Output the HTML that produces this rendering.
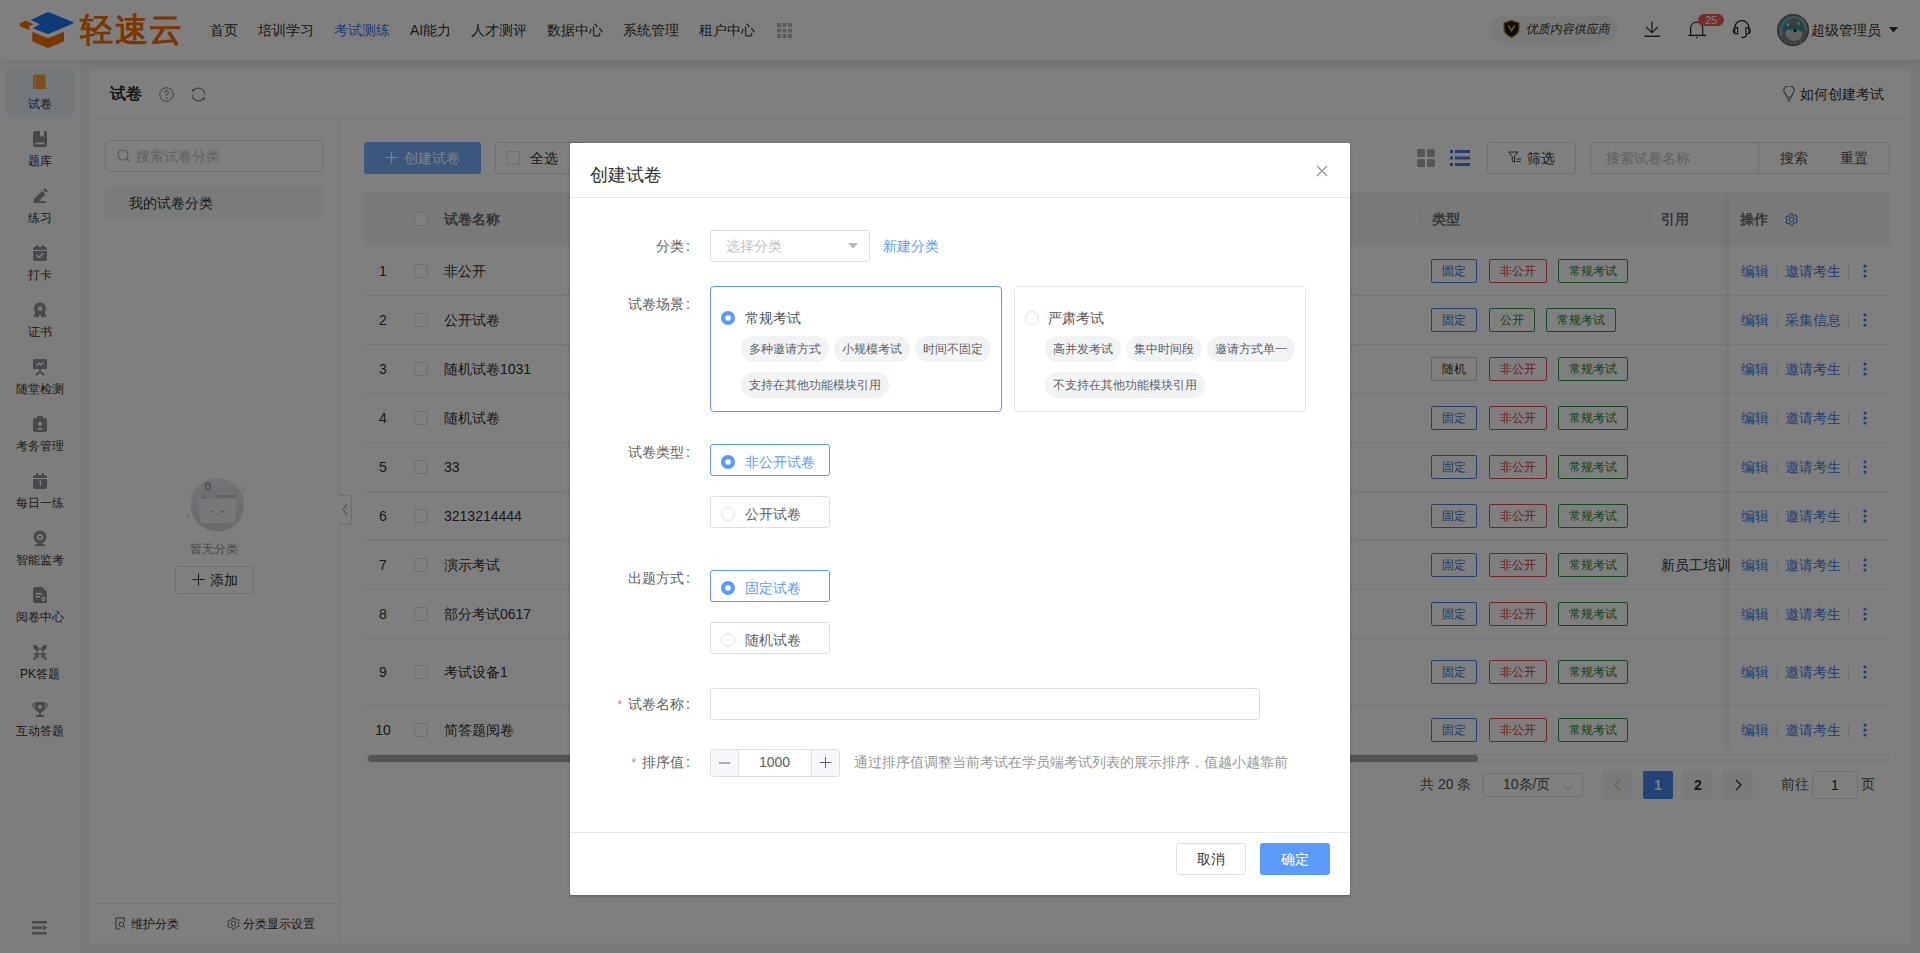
<!DOCTYPE html>
<html><head><meta charset="utf-8">
<style>
*{box-sizing:border-box;margin:0;padding:0}
html,body{width:1920px;height:953px;overflow:hidden;font-family:"Liberation Sans",sans-serif;color:#333;background:#f0f2f5;position:relative;font-size:14px}
.a{position:absolute;white-space:nowrap}
#top{position:absolute;left:0;top:0;width:1920px;height:60px;background:#fff;box-shadow:0 2px 8px rgba(0,0,0,.08);z-index:2}
#nav{position:absolute;left:0;top:60px;width:80px;height:893px;background:#fbfbfb}
.ni{position:absolute;left:5px;width:70px;height:49px;border-radius:8px;text-align:center}
.ni .lb{position:absolute;left:0;width:70px;top:28px;font-size:13px;line-height:16px;color:#333}
.ni svg{position:absolute;left:27px;top:8px}
#panel{position:absolute;left:90px;top:70px;width:1820px;height:873px;background:#fff}
#overlay{position:absolute;left:0;top:0;width:1920px;height:953px;background:rgba(0,0,0,.5);z-index:10}
.tag{height:24px;border:1px solid;border-radius:2px;text-align:center;font-size:12px;line-height:22px;background:#fff}
#modal{position:absolute;left:570px;top:143px;width:780px;height:752px;background:#fff;border-radius:2px;z-index:11;box-shadow:0 1px 3px rgba(0,0,0,.3)}
</style></head><body>
<div id="top">
 <svg class="a" style="left:10px;top:5px" width="66" height="46" viewBox="0 0 66 46">
  <path d="M20.8 14.9 L36.5 7.6 Q38.1 6.9 39.7 7.6 L63 17 Q64.5 17.8 63 18.6 L39.7 28.6 Q38.1 29.3 36.5 28.6 L22.8 23.3 L29.7 19.2 Z" fill="#1f72ee"/>
  <path d="M9.9 18.3 L15.8 15.8 L23.5 19.3 L19.3 21.3 L19.3 25.2 L10.5 21.5 Q9.5 21 9.9 18.3Z" fill="#f47000"/>
  <path d="M22.3 26.7 L38.1 33.2 L54 26.7 L54 36.6 L39 42.8 Q38.1 43.2 37.2 42.8 L22.3 36.6 Z" fill="#f47000"/>
 </svg>
 <div class="a" style="left:80px;top:9px;font-size:33px;line-height:42px;color:#f47000;font-weight:bold;letter-spacing:1.5px">轻速云</div>
 <div class="a" style="left:210px;top:20px;line-height:20px;color:#333">首页</div>
 <div class="a" style="left:258px;top:20px;line-height:20px;color:#333">培训学习</div>
 <div class="a" style="left:334px;top:20px;line-height:20px;color:#3f76e3">考试测练</div>
 <div class="a" style="left:410px;top:20px;line-height:20px;color:#333">AI能力</div>
 <div class="a" style="left:471px;top:20px;line-height:20px;color:#333">人才测评</div>
 <div class="a" style="left:547px;top:20px;line-height:20px;color:#333">数据中心</div>
 <div class="a" style="left:623px;top:20px;line-height:20px;color:#333">系统管理</div>
 <div class="a" style="left:699px;top:20px;line-height:20px;color:#333">租户中心</div>
 <svg class="a" style="left:777px;top:23px" width="15" height="15" viewBox="0 0 15 15" fill="#bbb"><rect x="0" y="0" width="4" height="4"/><rect x="5.5" y="0" width="4" height="4"/><rect x="11" y="0" width="4" height="4"/><rect x="0" y="5.5" width="4" height="4"/><rect x="5.5" y="5.5" width="4" height="4"/><rect x="11" y="5.5" width="4" height="4"/><rect x="0" y="11" width="4" height="4"/><rect x="5.5" y="11" width="4" height="4"/><rect x="11" y="11" width="4" height="4"/></svg>
 <div class="a" style="left:1489px;top:16px;width:129px;height:28px;border-radius:14px;background:#f4f4f4"></div>
 <svg class="a" style="left:1503px;top:20px" width="17" height="18" viewBox="0 0 17 18"><path d="M8.5 0.5 L16 3 L16 9 Q16 14 8.5 17.5 Q1 14 1 9 L1 3 Z" fill="#1a1a1a" stroke="#b8860b" stroke-width="1.2"/><path d="M4.5 5.5 L8.5 12 L12.5 5.5 L10.8 5.5 L8.5 9.3 L6.2 5.5 Z" fill="#f5c000"/></svg>
 <div class="a" style="left:1525px;top:21px;font-size:12px;line-height:16px;color:#333;transform:skewX(-10deg);transform-origin:0 100%;letter-spacing:0">优质内容供应商</div>
 <svg class="a" style="left:1635px;top:8px" width="125" height="42" viewBox="0 0 125 42" fill="none" stroke="#2b2b2b" stroke-width="1.2">
  <path d="M16.9 13.8 V24.4 M11 18.9 L16.9 24.6 L22.8 18.9"/><path d="M9.4 28.3 H24.7" stroke-width="1.4"/>
  <path d="M55.6 27 V19.5 A6.1 6.1 0 0 1 67.7 19.5 V27"/><path d="M53.4 27.4 H71" stroke-width="1.5"/><path d="M61 29.6 H62.6" stroke-width="1.3"/>
  <path d="M99.7 26 V19.8 A7.1 7.1 0 0 1 113.9 19.8 V26"/>
  <path d="M102.6 19.6 Q98.3 19.6 98.3 22.8 Q98.3 26 102.6 26Z M110.9 19.6 Q115.3 19.6 115.3 22.8 Q115.3 26 110.9 26Z"/>
  <path d="M111.6 26 Q111.6 29.6 106.5 29.6"/>
 </svg>
 <div class="a" style="left:1698px;top:14px;width:26px;height:12px;border-radius:6px;background:#f05b5b;color:#fff;font-size:11px;line-height:12px;text-align:center">25</div>
 <svg class="a" style="left:1777px;top:14px" width="32" height="32" viewBox="0 0 32 32"><defs><clipPath id="av"><circle cx="16" cy="16" r="16"/></clipPath></defs><g clip-path="url(#av)"><rect width="32" height="32" fill="#7c7c7c"/><path d="M4 22 Q3 6 16 3 Q28 3 29 16" fill="none" stroke="#70b8c8" stroke-width="2.2"/><path d="M7 11 L10 7 L14 12 L19 10 L23 6 L24 13 Q27 20 22 25 L12 26 Q6 20 7 11Z" fill="#2e8f98"/><path d="M8 20 Q9 14 14 16 Q19 14 25 18 Q26 26 18 27 Q11 27 8 20Z" fill="#bcc6ca"/><circle cx="18" cy="16.5" r="1.6" fill="#111"/><path d="M11 8 L12.5 12 L9 12Z M22 7 L23 11 L20 10Z" fill="#cfe3e6"/><path d="M5 26 Q16 34 28 26 L28 32 L5 32Z" fill="#556a80"/><path d="M8 27 L10 30 M13 28 L14 31 M19 28 L18 31 M24 27 L23 30" stroke="#b9c2d0" stroke-width="1"/></g><circle cx="16" cy="16" r="15.6" fill="none" stroke="#555" stroke-width="0.8"/></svg>
 <div class="a" style="left:1811px;top:20px;line-height:20px;color:#333">超级管理员</div>
 <svg class="a" style="left:1889px;top:27px" width="9" height="6" viewBox="0 0 9 6"><path d="M0 0 H9 L4.5 5.5Z" fill="#333"/></svg>
</div>
<div id="nav">
 <div class="a" style="left:5px;top:8px;width:70px;height:49px;border-radius:8px;background:#e9eff9"></div>
 <svg class="a" style="left:32px;top:14px" width="16" height="17" viewBox="0 0 16 17"><rect x="12" y="10" width="2.5" height="5" fill="#f0d040"/><rect x="1" y="0.5" width="12.5" height="14.5" rx="1.5" fill="#fb9e3e"/><path d="M3.3 2.5 V11 M3.3 12.2 V13.2" stroke="#ddd" stroke-width="0.9"/></svg>
 <div class="a" style="left:0;width:80px;text-align:center;top:36px;font-size:12px;line-height:16px;color:#333">试卷</div>
 <svg class="a" style="left:32px;top:71px" width="16" height="17" viewBox="0 0 16 17"><rect x="1" y="0" width="14" height="16" rx="2" fill="#8c9099"/><path d="M8 0 H12 V6 L10 4.5 L8 6Z" fill="#fff"/><rect x="3.5" y="11.5" width="9" height="1.8" fill="#fff"/></svg>
 <div class="a" style="left:0;width:80px;text-align:center;top:93px;font-size:12px;line-height:16px;color:#333">题库</div>
 <svg class="a" style="left:32px;top:128px" width="16" height="17" viewBox="0 0 16 17"><path d="M1.5 15 V11.5 L10 3 L13.5 6.5 L6.8 13.2 H14 V15 Z M11 2 L12.3 0.7 Q13 0 13.7 0.7 L15.3 2.3 Q16 3 15.3 3.7 L14.5 4.5Z" fill="#8c9099"/></svg>
 <div class="a" style="left:0;width:80px;text-align:center;top:150px;font-size:12px;line-height:16px;color:#333">练习</div>
 <svg class="a" style="left:32px;top:185px" width="16" height="17" viewBox="0 0 16 17"><rect x="1" y="2" width="14" height="14" rx="2" fill="#8c9099"/><rect x="4" y="0" width="2" height="4" fill="#8c9099"/><rect x="10" y="0" width="2" height="4" fill="#8c9099"/><rect x="1" y="5" width="14" height="1" fill="#fff"/><path d="M4.5 10 L7 12.5 L11.5 8" stroke="#fff" stroke-width="1.5" fill="none"/></svg>
 <div class="a" style="left:0;width:80px;text-align:center;top:207px;font-size:12px;line-height:16px;color:#333">打卡</div>
 <svg class="a" style="left:32px;top:242px" width="16" height="17" viewBox="0 0 16 17"><circle cx="8" cy="6.5" r="6" fill="#8c9099"/><path d="M8 3.5 L9 5.6 L11.2 5.8 L9.5 7.2 L10 9.4 L8 8.2 L6 9.4 L6.5 7.2 L4.8 5.8 L7 5.6Z" fill="#fff"/><path d="M3.5 10 L1.5 15 L4.5 14.5 L6 16.5 L7.5 12 M12.5 10 L14.5 15 L11.5 14.5 L10 16.5 L8.5 12" fill="#8c9099"/></svg>
 <div class="a" style="left:0;width:80px;text-align:center;top:264px;font-size:12px;line-height:16px;color:#333">证书</div>
 <svg class="a" style="left:32px;top:299px" width="16" height="17" viewBox="0 0 16 17"><rect x="1" y="0" width="14" height="10" rx="1.5" fill="#8c9099"/><path d="M4.5 7 L7 4 L9 6 L11.5 3" stroke="#fff" stroke-width="1.3" fill="none"/><path d="M8 10 V13 M4 16 L8 12.5 L12 16" stroke="#8c9099" stroke-width="1.8" fill="none"/></svg>
 <div class="a" style="left:0;width:80px;text-align:center;top:321px;font-size:12px;line-height:16px;color:#333">随堂检测</div>
 <svg class="a" style="left:32px;top:356px" width="16" height="17" viewBox="0 0 16 17"><rect x="1" y="2" width="14" height="14" rx="2" fill="#8c9099"/><rect x="5" y="0" width="6" height="3.5" rx="1" fill="#8c9099"/><circle cx="8" cy="8" r="2" fill="#fff"/><path d="M4.5 13.5 Q8 9.5 11.5 13.5Z" fill="#fff"/></svg>
 <div class="a" style="left:0;width:80px;text-align:center;top:378px;font-size:12px;line-height:16px;color:#333">考务管理</div>
 <svg class="a" style="left:32px;top:413px" width="16" height="17" viewBox="0 0 16 17"><rect x="1" y="2" width="14" height="14" rx="2" fill="#8c9099"/><rect x="4" y="0" width="2" height="4" fill="#8c9099"/><rect x="10" y="0" width="2" height="4" fill="#8c9099"/><rect x="1" y="5" width="14" height="1" fill="#fff"/><path d="M7 8.5 L8.5 8 V13" stroke="#fff" stroke-width="1.3" fill="none"/></svg>
 <div class="a" style="left:0;width:80px;text-align:center;top:435px;font-size:12px;line-height:16px;color:#333">每日一练</div>
 <svg class="a" style="left:32px;top:470px" width="16" height="17" viewBox="0 0 16 17"><circle cx="8" cy="7" r="6.5" fill="#8c9099"/><circle cx="8" cy="7" r="3" fill="#fff"/><circle cx="8" cy="7" r="1.5" fill="#8c9099"/><path d="M2 16 Q8 10 14 16Z" fill="#8c9099"/></svg>
 <div class="a" style="left:0;width:80px;text-align:center;top:492px;font-size:12px;line-height:16px;color:#333">智能监考</div>
 <svg class="a" style="left:32px;top:527px" width="16" height="17" viewBox="0 0 16 17"><path d="M1 2 Q1 0 3 0 H10 L15 5 V14 Q15 16 13 16 H3 Q1 16 1 14Z" fill="#8c9099"/><rect x="4" y="6" width="6" height="1.5" fill="#fff"/><rect x="4" y="9" width="4" height="1.5" fill="#fff"/><circle cx="11.5" cy="12" r="2.2" fill="#fff"/><circle cx="11.5" cy="12" r="1" fill="#8c9099"/></svg>
 <div class="a" style="left:0;width:80px;text-align:center;top:549px;font-size:12px;line-height:16px;color:#333">阅卷中心</div>
 <svg class="a" style="left:32px;top:584px" width="16" height="17" viewBox="0 0 16 17"><path d="M1 1 L4.5 1.5 L12.5 9.5 L10 12 L1.5 4.5Z M15 1 L11.5 1.5 L3.5 9.5 L6 12 L14.5 4.5Z" fill="#8c9099"/><path d="M2.5 9.5 L6.5 13.5 M13.5 9.5 L9.5 13.5 M1.5 15.5 L4.5 12.5 M14.5 15.5 L11.5 12.5" stroke="#8c9099" stroke-width="1.8"/></svg>
 <div class="a" style="left:0;width:80px;text-align:center;top:606px;font-size:12px;line-height:16px;color:#333">PK答题</div>
 <svg class="a" style="left:32px;top:641px" width="16" height="17" viewBox="0 0 16 17"><path d="M3 1 H13 V6 Q13 11 8 11 Q3 11 3 6Z" fill="#8c9099"/><path d="M3 3 H0.8 Q0.8 7 3.5 7.5 M13 3 H15.2 Q15.2 7 12.5 7.5" stroke="#8c9099" stroke-width="1.2" fill="none"/><path d="M8 3 L8.9 4.8 L10.8 5 L9.4 6.3 L9.8 8.2 L8 7.2 L6.2 8.2 L6.6 6.3 L5.2 5 L7.1 4.8Z" fill="#fff"/><rect x="7" y="11" width="2" height="3" fill="#8c9099"/><rect x="4" y="14" width="8" height="2" fill="#8c9099"/></svg>
 <div class="a" style="left:0;width:80px;text-align:center;top:663px;font-size:12px;line-height:16px;color:#333">互动答题</div>
 <svg class="a" style="left:32px;top:861px" width="16" height="14" viewBox="0 0 16 14" fill="#8c9099"><rect x="0" y="0" width="15" height="2.5"/><rect x="0" y="5.5" width="10" height="2.5"/><rect x="0" y="11" width="15" height="2.5"/><path d="M11 4 L15.5 6.75 L11 9.5Z"/></svg>
</div>
<div id="panel"></div>
<div id="content">
 <div class="a" style="left:110px;top:83px;font-size:16px;line-height:22px;font-weight:bold;color:#333">试卷</div>
 <svg class="a" style="left:159px;top:87px" width="15" height="15" viewBox="0 0 15 15" fill="none" stroke="#7a8190" stroke-width="1"><circle cx="7.5" cy="7.5" r="6.8"/><path d="M5.5 5.8 Q5.5 3.8 7.5 3.8 Q9.5 3.8 9.5 5.6 Q9.5 6.8 7.5 7.6 V9"/><circle cx="7.5" cy="11" r="0.5" fill="#777"/></svg>
 <svg class="a" style="left:191px;top:87px" width="15" height="15" viewBox="0 0 15 15" fill="none" stroke="#7a8190" stroke-width="1.1"><path d="M2.04 4.35 A6.3 6.3 0 0 1 13.8 7.5 M12.96 10.65 A6.3 6.3 0 0 1 1.2 7.5"/><path d="M1 2 L4.2 2.8 L1.6 5.2Z M14 13 L10.8 12.2 L13.4 9.8Z" fill="#7a8190" stroke="none"/></svg>
 <svg class="a" style="left:1783px;top:86px" width="12" height="16" viewBox="0 0 12 16" fill="none" stroke="#666" stroke-width="1.1"><path d="M3.5 11 Q3.5 9 2 7.5 Q0.8 6 0.8 4.8 A5.2 5.2 0 0 1 11.2 4.8 Q11.2 6 10 7.5 Q8.5 9 8.5 11 Z M4 13 H8 M4.8 15 H7.2"/></svg>
 <div class="a" style="left:1800px;top:84px;line-height:20px;color:#333">如何创建考试</div>
 <div class="a" style="left:90px;top:118px;width:1820px;height:1px;background:#ebeef5"></div>
 <div class="a" style="left:339px;top:119px;width:1px;height:824px;background:#e4e7ed"></div>
 <!-- category panel -->
 <div class="a" style="left:105px;top:140px;width:218px;height:32px;border:1px solid #dcdfe6;border-radius:4px"></div>
 <svg class="a" style="left:117px;top:149px" width="14" height="14" viewBox="0 0 14 14" fill="none" stroke="#b0b3b8" stroke-width="1.2"><circle cx="6" cy="6" r="5"/><path d="M9.7 9.7 L12.5 12.5"/></svg>
 <div class="a" style="left:136px;top:146px;line-height:20px;color:#c0c4cc">搜索试卷分类</div>
 <div class="a" style="left:105px;top:187px;width:218px;height:31px;background:#f5f6f8"></div>
 <div class="a" style="left:129px;top:193px;line-height:20px;color:#333">我的试卷分类</div>
 <svg class="a" style="left:185px;top:474px" width="64" height="62" viewBox="0 0 64 62">
  <defs><linearGradient id="ill" x1="0" y1="0" x2="0" y2="1"><stop offset="0" stop-color="#e6e9ee"/><stop offset="1" stop-color="#d3d7df"/></linearGradient></defs>
  <circle cx="32.4" cy="30.8" r="26.7" fill="url(#ill)"/>
  <circle cx="5" cy="15" r="1" fill="#e3e6ec"/><circle cx="56" cy="11" r="1" fill="#e3e6ec"/><circle cx="58" cy="16" r="1.6" fill="#e3e6ec"/><circle cx="3" cy="42" r="2" fill="#e3e6ec"/>
  <path d="M17 21 H52 V48 H17Z" fill="#c3c8d1"/>
  <ellipse cx="23" cy="12.5" rx="2.4" ry="3.4" fill="none" stroke="#8d939d" stroke-width="1.2"/>
  <circle cx="26" cy="21" r="5" fill="#dadee5"/>
  <path d="M13 27 Q13 25 15 25 L50 24 Q52 24 52 26 L51 47 Q51 49 49 49 L17 49 Q15 49 15 47 Z" fill="#eef0f4"/>
  <circle cx="27.5" cy="37.5" r="1" fill="#8e949f"/><circle cx="37.5" cy="37.5" r="1" fill="#8e949f"/><circle cx="32.5" cy="40.5" r="0.6" fill="#8e949f"/>
 </svg>
 <div class="a" style="left:190px;top:541px;font-size:12px;line-height:16px;color:#909399">暂无分类</div>
 <div class="a" style="left:175px;top:566px;width:79px;height:28px;border:1px solid #dcdfe6;border-radius:3px"></div>
 <svg class="a" style="left:192px;top:573px" width="13" height="13" viewBox="0 0 13 13" stroke="#333" stroke-width="1.1"><path d="M6.5 0.5 V12.5 M0.5 6.5 H12.5"/></svg>
 <div class="a" style="left:210px;top:570px;line-height:20px;color:#333">添加</div>
 <div class="a" style="left:90px;top:903px;width:249px;height:1px;background:#ebeef5"></div>
 <svg class="a" style="left:115px;top:917px" width="12" height="13" viewBox="0 0 12 13" fill="none" stroke="#666" stroke-width="1"><path d="M9.5 5 V1 H1 V12 H5"/><circle cx="6.5" cy="7.5" r="2.3"/><path d="M8.2 9.2 L10.8 11.8"/></svg>
 <div class="a" style="left:131px;top:916px;font-size:12px;line-height:16px;color:#333">维护分类</div>
 <svg class="a" style="left:227px;top:917px" width="13" height="13" viewBox="0 0 13 13" fill="none" stroke="#666" stroke-width="1"><circle cx="6.5" cy="6.5" r="2.2"/><path d="M5.5 0.8 H7.5 L8 2.5 L9.5 3.2 L11 2.3 L12.3 3.8 L11.2 5.3 L11.5 7 L12.3 8.5 L11 10 L9.5 9.6 L8 10.5 L7.5 12.2 H5.5 L5 10.5 L3.5 9.8 L2 10.7 L0.7 9.2 L1.8 7.7 L1.5 6 L0.7 4.5 L2 3 L3.5 3.4 L5 2.5Z"/></svg>
 <div class="a" style="left:243px;top:916px;font-size:12px;line-height:16px;color:#333">分类显示设置</div>
 <div class="a" style="left:339px;top:495px;width:13px;height:30px;background:#fff;border:1px solid #dcdfe6;border-left:none;border-radius:0 3px 3px 0"></div>
 <svg class="a" style="left:342px;top:503px" width="6" height="13" viewBox="0 0 6 13" fill="none" stroke="#888" stroke-width="1"><path d="M5 1 L1 6.5 L5 12"/></svg>
 <div class="a" style="left:364px;top:142px;width:117px;height:32px;border-radius:3px;background:#78acf8"></div>
 <svg class="a" style="left:385px;top:151px" width="13" height="13" viewBox="0 0 13 13" stroke="#fff" stroke-width="1.2"><path d="M6.5 0.5 V12.5 M0.5 6.5 H12.5"/></svg>
 <div class="a" style="left:404px;top:148px;line-height:20px;color:#fff">创建试卷</div>
 <div class="a" style="left:495px;top:142px;width:90px;height:32px;border:1px solid #dcdfe6;border-radius:3px"></div>
 <div class="a" style="left:506px;top:151px;width:14px;height:14px;border:1px solid #dcdfe6;border-radius:2px"></div>
 <div class="a" style="left:530px;top:148px;line-height:20px;color:#333">全选</div>
 <svg class="a" style="left:1417px;top:149px" width="18" height="18" viewBox="0 0 18 18" fill="#aaa"><rect x="0" y="0" width="8" height="8" rx="1.5"/><rect x="10" y="0" width="8" height="8" rx="1.5"/><rect x="0" y="10" width="8" height="8" rx="1.5"/><rect x="10" y="10" width="8" height="8" rx="1.5"/></svg>
 <svg class="a" style="left:1450px;top:150px" width="20" height="16" viewBox="0 0 20 16" fill="#4a80e0"><rect x="0" y="0" width="3" height="3"/><rect x="5" y="0" width="15" height="3"/><rect x="0" y="6.5" width="3" height="3"/><rect x="5" y="6.5" width="15" height="3"/><rect x="0" y="13" width="3" height="3"/><rect x="5" y="13" width="15" height="3"/></svg>
 <div class="a" style="left:1487px;top:142px;width:89px;height:32px;border:1px solid #dcdfe6;border-radius:3px"></div>
 <svg class="a" style="left:1508px;top:151px" width="14" height="13" viewBox="0 0 14 13" fill="none" stroke="#444" stroke-width="1"><path d="M0.8 1 H10 L6.5 5.5 V11.5 L4.3 10 V5.5Z M8.5 8 H13 M8.5 10.5 H13"/></svg>
 <div class="a" style="left:1527px;top:148px;line-height:20px;color:#333">筛选</div>
 <div class="a" style="left:1590px;top:142px;width:300px;height:32px;border:1px solid #dcdfe6;border-radius:3px"></div>
 <div class="a" style="left:1758px;top:143px;width:1px;height:30px;background:#dcdfe6"></div>
 <div class="a" style="left:1606px;top:148px;line-height:20px;color:#c0c4cc">搜索试卷名称</div>
 <div class="a" style="left:1780px;top:148px;line-height:20px;color:#555">搜索</div>
 <div class="a" style="left:1840px;top:148px;line-height:20px;color:#555">重置</div>
 <div class="a" style="left:364px;top:192px;width:1526px;height:54px;background:#f4f5f7"></div>
 <div class="a" style="left:414px;top:212px;width:14px;height:14px;border:1px solid #dcdfe6;border-radius:2px;background:#fff"></div>
 <div class="a" style="left:444px;top:209px;line-height:20px;color:#6c7077;font-weight:bold">试卷名称</div>
 <div class="a" style="left:1432px;top:209px;line-height:20px;color:#6c7077;font-weight:bold">类型</div>
 <div class="a" style="left:1661px;top:209px;line-height:20px;color:#6c7077;font-weight:bold">引用</div>
 <div class="a" style="left:1740px;top:209px;line-height:20px;color:#6c7077;font-weight:bold">操作</div>
 <div class="a" style="left:1420px;top:211px;width:1px;height:17px;background:#dcdfe6"></div>
 <div class="a" style="left:1649px;top:211px;width:1px;height:17px;background:#dcdfe6"></div>
 <svg class="a" style="left:1785px;top:213px" width="13" height="13" viewBox="0 0 13 13" fill="none" stroke="#4a80e0" stroke-width="1.1"><circle cx="6.5" cy="6.5" r="2.2"/><path d="M5.5 0.8 H7.5 L8 2.5 L9.5 3.2 L11 2.3 L12.3 3.8 L11.2 5.3 L11.5 7 L12.3 8.5 L11 10 L9.5 9.6 L8 10.5 L7.5 12.2 H5.5 L5 10.5 L3.5 9.8 L2 10.7 L0.7 9.2 L1.8 7.7 L1.5 6 L0.7 4.5 L2 3 L3.5 3.4 L5 2.5Z"/></svg>
 <div class="a" style="left:364px;top:295px;width:1526px;height:1px;background:#ebeef5"></div>
 <div class="a" style="left:364px;width:38px;text-align:center;top:261px;line-height:20px;color:#333">1</div>
 <div class="a" style="left:414px;top:264px;width:14px;height:14px;border:1px solid #dcdfe6;border-radius:2px"></div>
 <div class="a" style="left:444px;top:261px;line-height:20px;color:#333">非公开</div>
 <div class="a tag" style="left:1431px;top:259px;width:46px;border-color:#4a7fe0;color:#3f70d0">固定</div>
 <div class="a tag" style="left:1489px;top:259px;width:58px;border-color:#e25050;color:#d64040">非公开</div>
 <div class="a tag" style="left:1558px;top:259px;width:70px;border-color:#2e9a4a;color:#228840">常规考试</div>
 <div class="a" style="left:1741px;top:261px;line-height:20px;color:#4a80e0">编辑</div>
 <div class="a" style="left:1777px;top:265px;width:1px;height:14px;background:#dcdfe6"></div>
 <div class="a" style="left:1785px;top:261px;line-height:20px;color:#4a80e0">邀请考生</div>
 <div class="a" style="left:1848px;top:265px;width:1px;height:14px;background:#dcdfe6"></div>
 <svg class="a" style="left:1863px;top:264px" width="4" height="14" viewBox="0 0 4 14" fill="#4a80e0"><circle cx="2" cy="2" r="1.6"/><circle cx="2" cy="7" r="1.6"/><circle cx="2" cy="12" r="1.6"/></svg>
 <div class="a" style="left:364px;top:344px;width:1526px;height:1px;background:#ebeef5"></div>
 <div class="a" style="left:364px;width:38px;text-align:center;top:310px;line-height:20px;color:#333">2</div>
 <div class="a" style="left:414px;top:313px;width:14px;height:14px;border:1px solid #dcdfe6;border-radius:2px"></div>
 <div class="a" style="left:444px;top:310px;line-height:20px;color:#333">公开试卷</div>
 <div class="a tag" style="left:1431px;top:308px;width:46px;border-color:#4a7fe0;color:#3f70d0">固定</div>
 <div class="a tag" style="left:1489px;top:308px;width:46px;border-color:#2e9a4a;color:#228840">公开</div>
 <div class="a tag" style="left:1546px;top:308px;width:70px;border-color:#2e9a4a;color:#228840">常规考试</div>
 <div class="a" style="left:1741px;top:310px;line-height:20px;color:#4a80e0">编辑</div>
 <div class="a" style="left:1777px;top:314px;width:1px;height:14px;background:#dcdfe6"></div>
 <div class="a" style="left:1785px;top:310px;line-height:20px;color:#4a80e0">采集信息</div>
 <div class="a" style="left:1848px;top:314px;width:1px;height:14px;background:#dcdfe6"></div>
 <svg class="a" style="left:1863px;top:313px" width="4" height="14" viewBox="0 0 4 14" fill="#4a80e0"><circle cx="2" cy="2" r="1.6"/><circle cx="2" cy="7" r="1.6"/><circle cx="2" cy="12" r="1.6"/></svg>
 <div class="a" style="left:364px;top:393px;width:1526px;height:1px;background:#ebeef5"></div>
 <div class="a" style="left:364px;width:38px;text-align:center;top:359px;line-height:20px;color:#333">3</div>
 <div class="a" style="left:414px;top:362px;width:14px;height:14px;border:1px solid #dcdfe6;border-radius:2px"></div>
 <div class="a" style="left:444px;top:359px;line-height:20px;color:#333">随机试卷1031</div>
 <div class="a tag" style="left:1431px;top:357px;width:46px;border-color:#c8c8c8;color:#333">随机</div>
 <div class="a tag" style="left:1489px;top:357px;width:58px;border-color:#e25050;color:#d64040">非公开</div>
 <div class="a tag" style="left:1558px;top:357px;width:70px;border-color:#2e9a4a;color:#228840">常规考试</div>
 <div class="a" style="left:1741px;top:359px;line-height:20px;color:#4a80e0">编辑</div>
 <div class="a" style="left:1777px;top:363px;width:1px;height:14px;background:#dcdfe6"></div>
 <div class="a" style="left:1785px;top:359px;line-height:20px;color:#4a80e0">邀请考生</div>
 <div class="a" style="left:1848px;top:363px;width:1px;height:14px;background:#dcdfe6"></div>
 <svg class="a" style="left:1863px;top:362px" width="4" height="14" viewBox="0 0 4 14" fill="#4a80e0"><circle cx="2" cy="2" r="1.6"/><circle cx="2" cy="7" r="1.6"/><circle cx="2" cy="12" r="1.6"/></svg>
 <div class="a" style="left:364px;top:442px;width:1526px;height:1px;background:#ebeef5"></div>
 <div class="a" style="left:364px;width:38px;text-align:center;top:408px;line-height:20px;color:#333">4</div>
 <div class="a" style="left:414px;top:411px;width:14px;height:14px;border:1px solid #dcdfe6;border-radius:2px"></div>
 <div class="a" style="left:444px;top:408px;line-height:20px;color:#333">随机试卷</div>
 <div class="a tag" style="left:1431px;top:406px;width:46px;border-color:#4a7fe0;color:#3f70d0">固定</div>
 <div class="a tag" style="left:1489px;top:406px;width:58px;border-color:#e25050;color:#d64040">非公开</div>
 <div class="a tag" style="left:1558px;top:406px;width:70px;border-color:#2e9a4a;color:#228840">常规考试</div>
 <div class="a" style="left:1741px;top:408px;line-height:20px;color:#4a80e0">编辑</div>
 <div class="a" style="left:1777px;top:412px;width:1px;height:14px;background:#dcdfe6"></div>
 <div class="a" style="left:1785px;top:408px;line-height:20px;color:#4a80e0">邀请考生</div>
 <div class="a" style="left:1848px;top:412px;width:1px;height:14px;background:#dcdfe6"></div>
 <svg class="a" style="left:1863px;top:411px" width="4" height="14" viewBox="0 0 4 14" fill="#4a80e0"><circle cx="2" cy="2" r="1.6"/><circle cx="2" cy="7" r="1.6"/><circle cx="2" cy="12" r="1.6"/></svg>
 <div class="a" style="left:364px;top:491px;width:1526px;height:1px;background:#ebeef5"></div>
 <div class="a" style="left:364px;width:38px;text-align:center;top:457px;line-height:20px;color:#333">5</div>
 <div class="a" style="left:414px;top:460px;width:14px;height:14px;border:1px solid #dcdfe6;border-radius:2px"></div>
 <div class="a" style="left:444px;top:457px;line-height:20px;color:#333">33</div>
 <div class="a tag" style="left:1431px;top:455px;width:46px;border-color:#4a7fe0;color:#3f70d0">固定</div>
 <div class="a tag" style="left:1489px;top:455px;width:58px;border-color:#e25050;color:#d64040">非公开</div>
 <div class="a tag" style="left:1558px;top:455px;width:70px;border-color:#2e9a4a;color:#228840">常规考试</div>
 <div class="a" style="left:1741px;top:457px;line-height:20px;color:#4a80e0">编辑</div>
 <div class="a" style="left:1777px;top:461px;width:1px;height:14px;background:#dcdfe6"></div>
 <div class="a" style="left:1785px;top:457px;line-height:20px;color:#4a80e0">邀请考生</div>
 <div class="a" style="left:1848px;top:461px;width:1px;height:14px;background:#dcdfe6"></div>
 <svg class="a" style="left:1863px;top:460px" width="4" height="14" viewBox="0 0 4 14" fill="#4a80e0"><circle cx="2" cy="2" r="1.6"/><circle cx="2" cy="7" r="1.6"/><circle cx="2" cy="12" r="1.6"/></svg>
 <div class="a" style="left:364px;top:540px;width:1526px;height:1px;background:#ebeef5"></div>
 <div class="a" style="left:364px;width:38px;text-align:center;top:506px;line-height:20px;color:#333">6</div>
 <div class="a" style="left:414px;top:509px;width:14px;height:14px;border:1px solid #dcdfe6;border-radius:2px"></div>
 <div class="a" style="left:444px;top:506px;line-height:20px;color:#333">3213214444</div>
 <div class="a tag" style="left:1431px;top:504px;width:46px;border-color:#4a7fe0;color:#3f70d0">固定</div>
 <div class="a tag" style="left:1489px;top:504px;width:58px;border-color:#e25050;color:#d64040">非公开</div>
 <div class="a tag" style="left:1558px;top:504px;width:70px;border-color:#2e9a4a;color:#228840">常规考试</div>
 <div class="a" style="left:1741px;top:506px;line-height:20px;color:#4a80e0">编辑</div>
 <div class="a" style="left:1777px;top:510px;width:1px;height:14px;background:#dcdfe6"></div>
 <div class="a" style="left:1785px;top:506px;line-height:20px;color:#4a80e0">邀请考生</div>
 <div class="a" style="left:1848px;top:510px;width:1px;height:14px;background:#dcdfe6"></div>
 <svg class="a" style="left:1863px;top:509px" width="4" height="14" viewBox="0 0 4 14" fill="#4a80e0"><circle cx="2" cy="2" r="1.6"/><circle cx="2" cy="7" r="1.6"/><circle cx="2" cy="12" r="1.6"/></svg>
 <div class="a" style="left:364px;top:589px;width:1526px;height:1px;background:#ebeef5"></div>
 <div class="a" style="left:364px;width:38px;text-align:center;top:555px;line-height:20px;color:#333">7</div>
 <div class="a" style="left:414px;top:558px;width:14px;height:14px;border:1px solid #dcdfe6;border-radius:2px"></div>
 <div class="a" style="left:444px;top:555px;line-height:20px;color:#333">演示考试</div>
 <div class="a tag" style="left:1431px;top:553px;width:46px;border-color:#4a7fe0;color:#3f70d0">固定</div>
 <div class="a tag" style="left:1489px;top:553px;width:58px;border-color:#e25050;color:#d64040">非公开</div>
 <div class="a tag" style="left:1558px;top:553px;width:70px;border-color:#2e9a4a;color:#228840">常规考试</div>
 <div class="a" style="left:1661px;top:555px;line-height:20px;color:#333">新员工培训</div>
 <div class="a" style="left:1741px;top:555px;line-height:20px;color:#4a80e0">编辑</div>
 <div class="a" style="left:1777px;top:559px;width:1px;height:14px;background:#dcdfe6"></div>
 <div class="a" style="left:1785px;top:555px;line-height:20px;color:#4a80e0">邀请考生</div>
 <div class="a" style="left:1848px;top:559px;width:1px;height:14px;background:#dcdfe6"></div>
 <svg class="a" style="left:1863px;top:558px" width="4" height="14" viewBox="0 0 4 14" fill="#4a80e0"><circle cx="2" cy="2" r="1.6"/><circle cx="2" cy="7" r="1.6"/><circle cx="2" cy="12" r="1.6"/></svg>
 <div class="a" style="left:364px;top:638px;width:1526px;height:1px;background:#ebeef5"></div>
 <div class="a" style="left:364px;width:38px;text-align:center;top:604px;line-height:20px;color:#333">8</div>
 <div class="a" style="left:414px;top:607px;width:14px;height:14px;border:1px solid #dcdfe6;border-radius:2px"></div>
 <div class="a" style="left:444px;top:604px;line-height:20px;color:#333">部分考试0617</div>
 <div class="a tag" style="left:1431px;top:602px;width:46px;border-color:#4a7fe0;color:#3f70d0">固定</div>
 <div class="a tag" style="left:1489px;top:602px;width:58px;border-color:#e25050;color:#d64040">非公开</div>
 <div class="a tag" style="left:1558px;top:602px;width:70px;border-color:#2e9a4a;color:#228840">常规考试</div>
 <div class="a" style="left:1741px;top:604px;line-height:20px;color:#4a80e0">编辑</div>
 <div class="a" style="left:1777px;top:608px;width:1px;height:14px;background:#dcdfe6"></div>
 <div class="a" style="left:1785px;top:604px;line-height:20px;color:#4a80e0">邀请考生</div>
 <div class="a" style="left:1848px;top:608px;width:1px;height:14px;background:#dcdfe6"></div>
 <svg class="a" style="left:1863px;top:607px" width="4" height="14" viewBox="0 0 4 14" fill="#4a80e0"><circle cx="2" cy="2" r="1.6"/><circle cx="2" cy="7" r="1.6"/><circle cx="2" cy="12" r="1.6"/></svg>
 <div class="a" style="left:364px;top:705px;width:1526px;height:1px;background:#ebeef5"></div>
 <div class="a" style="left:364px;width:38px;text-align:center;top:662px;line-height:20px;color:#333">9</div>
 <div class="a" style="left:414px;top:665px;width:14px;height:14px;border:1px solid #dcdfe6;border-radius:2px"></div>
 <div class="a" style="left:444px;top:662px;line-height:20px;color:#333">考试设备1</div>
 <div class="a tag" style="left:1431px;top:660px;width:46px;border-color:#4a7fe0;color:#3f70d0">固定</div>
 <div class="a tag" style="left:1489px;top:660px;width:58px;border-color:#e25050;color:#d64040">非公开</div>
 <div class="a tag" style="left:1558px;top:660px;width:70px;border-color:#2e9a4a;color:#228840">常规考试</div>
 <div class="a" style="left:1741px;top:662px;line-height:20px;color:#4a80e0">编辑</div>
 <div class="a" style="left:1777px;top:666px;width:1px;height:14px;background:#dcdfe6"></div>
 <div class="a" style="left:1785px;top:662px;line-height:20px;color:#4a80e0">邀请考生</div>
 <div class="a" style="left:1848px;top:666px;width:1px;height:14px;background:#dcdfe6"></div>
 <svg class="a" style="left:1863px;top:665px" width="4" height="14" viewBox="0 0 4 14" fill="#4a80e0"><circle cx="2" cy="2" r="1.6"/><circle cx="2" cy="7" r="1.6"/><circle cx="2" cy="12" r="1.6"/></svg>
 <div class="a" style="left:364px;top:754px;width:1526px;height:1px;background:#ebeef5"></div>
 <div class="a" style="left:364px;width:38px;text-align:center;top:720px;line-height:20px;color:#333">10</div>
 <div class="a" style="left:414px;top:723px;width:14px;height:14px;border:1px solid #dcdfe6;border-radius:2px"></div>
 <div class="a" style="left:444px;top:720px;line-height:20px;color:#333">简答题阅卷</div>
 <div class="a tag" style="left:1431px;top:718px;width:46px;border-color:#4a7fe0;color:#3f70d0">固定</div>
 <div class="a tag" style="left:1489px;top:718px;width:58px;border-color:#e25050;color:#d64040">非公开</div>
 <div class="a tag" style="left:1558px;top:718px;width:70px;border-color:#2e9a4a;color:#228840">常规考试</div>
 <div class="a" style="left:1741px;top:720px;line-height:20px;color:#4a80e0">编辑</div>
 <div class="a" style="left:1777px;top:724px;width:1px;height:14px;background:#dcdfe6"></div>
 <div class="a" style="left:1785px;top:720px;line-height:20px;color:#4a80e0">邀请考生</div>
 <div class="a" style="left:1848px;top:724px;width:1px;height:14px;background:#dcdfe6"></div>
 <svg class="a" style="left:1863px;top:723px" width="4" height="14" viewBox="0 0 4 14" fill="#4a80e0"><circle cx="2" cy="2" r="1.6"/><circle cx="2" cy="7" r="1.6"/><circle cx="2" cy="12" r="1.6"/></svg>
 <div class="a" style="left:1729px;top:192px;width:161px;height:563px;box-shadow:-6px 0 8px -4px rgba(0,0,0,.10)"></div>
 <div class="a" style="left:364px;top:754px;width:1526px;height:9px;background:#fafafa;border-top:1px solid #ebeef5;border-bottom:1px solid #ebeef5"></div>
 <div class="a" style="left:368px;top:755px;width:1110px;height:7px;border-radius:4px;background:#a8a8a8"></div>
 <div class="a" style="left:1420px;top:774px;line-height:20px;color:#555">共 20 条</div>
 <div class="a" style="left:1483px;top:773px;width:100px;height:24px;border:1px solid #dcdfe6;border-radius:3px"></div>
 <div class="a" style="left:1503px;top:774px;line-height:20px;color:#555">10条/页</div>
 <svg class="a" style="left:1563px;top:784px" width="10" height="7" viewBox="0 0 10 7" fill="none" stroke="#bbb" stroke-width="1"><path d="M1 1 L5 5.5 L9 1"/></svg>
 <div class="a" style="left:1603px;top:771px;width:30px;height:28px;background:#f4f4f5;border-radius:2px"></div>
 <svg class="a" style="left:1614px;top:779px" width="7" height="12" viewBox="0 0 7 12" fill="none" stroke="#c0c4cc" stroke-width="1.3"><path d="M6 1 L1 6 L6 11"/></svg>
 <div class="a" style="left:1643px;top:771px;width:30px;height:28px;background:#4a86f0;border-radius:2px;color:#fff;font-weight:bold;text-align:center;line-height:28px">1</div>
 <div class="a" style="left:1683px;top:771px;width:30px;height:28px;background:#f4f4f5;border-radius:2px;color:#333;font-weight:bold;text-align:center;line-height:28px">2</div>
 <div class="a" style="left:1723px;top:771px;width:30px;height:28px;background:#f4f4f5;border-radius:2px"></div>
 <svg class="a" style="left:1735px;top:779px" width="7" height="12" viewBox="0 0 7 12" fill="none" stroke="#333" stroke-width="1.3"><path d="M1 1 L6 6 L1 11"/></svg>
 <div class="a" style="left:1781px;top:774px;line-height:20px;color:#555">前往</div>
 <div class="a" style="left:1812px;top:771px;width:46px;height:28px;border:1px solid #dcdfe6;border-radius:3px;text-align:center;line-height:26px;color:#333">1</div>
 <div class="a" style="left:1861px;top:774px;line-height:20px;color:#555">页</div>
</div>
<div id="overlay"></div>
<div id="modal">
 <div class="a" style="left:20px;top:20px;font-size:18px;line-height:24px;color:#333">创建试卷</div>
 <svg class="a" style="left:746px;top:22px" width="12" height="12" viewBox="0 0 12 12" stroke="#909399" stroke-width="1.2"><path d="M1 1 L11 11 M11 1 L1 11"/></svg>
 <div class="a" style="left:0px;top:54px;width:780px;height:1px;background:#e8e8e8"></div>
 <div class="a" style="left:-100px;top:93px;width:220px;text-align:right;line-height:20px;color:#606266">分类<span style="margin-left:2px">:</span></div>
 <div class="a" style="left:140px;top:87px;width:160px;height:32px;border:1px solid #dcdfe6;border-radius:3px"></div>
 <div class="a" style="left:156px;top:93px;line-height:20px;color:#c0c4cc">选择分类</div>
 <svg class="a" style="left:278px;top:100px" width="10" height="6" viewBox="0 0 10 6" fill="#b4b8bf"><path d="M0 0 H10 L5 5.5Z"/></svg>
 <div class="a" style="left:313px;top:93px;line-height:20px;color:#5b9bf9">新建分类</div>
 <div class="a" style="left:-100px;top:151px;width:220px;text-align:right;line-height:20px;color:#606266">试卷场景<span style="margin-left:2px">:</span></div>
 <div class="a" style="left:140px;top:143px;width:292px;height:126px;border:1px solid #5b9bf9;border-radius:4px"></div>
 <div class="a" style="left:444px;top:143px;width:292px;height:126px;border:1px solid #e4e7ed;border-radius:4px"></div>
 <svg class="a" style="left:151px;top:168px" width="14" height="14" viewBox="0 0 14 14"><circle cx="7" cy="7" r="7" fill="#5b9bf9"/><circle cx="7" cy="7" r="2.8" fill="#fff"/></svg>
 <div class="a" style="left:175px;top:165px;line-height:20px;color:#555">常规考试</div>
 <svg class="a" style="left:455px;top:168px" width="14" height="14" viewBox="0 0 14 14"><circle cx="7" cy="7" r="6.5" fill="#fff" stroke="#dcdfe6" stroke-width="1"/></svg>
 <div class="a" style="left:478px;top:165px;line-height:20px;color:#555">严肃考试</div>
 <div class="a" style="left:171px;top:193px;height:26px;padding:0 8px;border-radius:13px;background:#f2f3f5;font-size:12px;line-height:26px;color:#606266">多种邀请方式</div>
 <div class="a" style="left:264px;top:193px;height:26px;padding:0 8px;border-radius:13px;background:#f2f3f5;font-size:12px;line-height:26px;color:#606266">小规模考试</div>
 <div class="a" style="left:345px;top:193px;height:26px;padding:0 8px;border-radius:13px;background:#f2f3f5;font-size:12px;line-height:26px;color:#606266">时间不固定</div>
 <div class="a" style="left:171px;top:229px;height:26px;padding:0 8px;border-radius:13px;background:#f2f3f5;font-size:12px;line-height:26px;color:#606266">支持在其他功能模块引用</div>
 <div class="a" style="left:475px;top:193px;height:26px;padding:0 8px;border-radius:13px;background:#f2f3f5;font-size:12px;line-height:26px;color:#606266">高并发考试</div>
 <div class="a" style="left:556px;top:193px;height:26px;padding:0 8px;border-radius:13px;background:#f2f3f5;font-size:12px;line-height:26px;color:#606266">集中时间段</div>
 <div class="a" style="left:637px;top:193px;height:26px;padding:0 8px;border-radius:13px;background:#f2f3f5;font-size:12px;line-height:26px;color:#606266">邀请方式单一</div>
 <div class="a" style="left:475px;top:229px;height:26px;padding:0 8px;border-radius:13px;background:#f2f3f5;font-size:12px;line-height:26px;color:#606266">不支持在其他功能模块引用</div>
 <div class="a" style="left:-100px;top:299px;width:220px;text-align:right;line-height:20px;color:#606266">试卷类型<span style="margin-left:2px">:</span></div>
 <div class="a" style="left:140px;top:301px;width:120px;height:32px;border:1px solid #5b9bf9;border-radius:3px"></div><svg class="a" style="left:151px;top:312px" width="14" height="14" viewBox="0 0 14 14"><circle cx="7" cy="7" r="7" fill="#5b9bf9"/><circle cx="7" cy="7" r="2.8" fill="#fff"/></svg><div class="a" style="left:175px;top:309px;line-height:20px;color:#5b9bf9">非公开试卷</div>
 <div class="a" style="left:140px;top:353px;width:120px;height:32px;border:1px solid #dcdfe6;border-radius:3px"></div><svg class="a" style="left:151px;top:364px" width="14" height="14" viewBox="0 0 14 14"><circle cx="7" cy="7" r="6.5" fill="#fff" stroke="#dcdfe6" stroke-width="1"/></svg><div class="a" style="left:175px;top:361px;line-height:20px;color:#606266">公开试卷</div>
 <div class="a" style="left:-100px;top:425px;width:220px;text-align:right;line-height:20px;color:#606266">出题方式<span style="margin-left:2px">:</span></div>
 <div class="a" style="left:140px;top:427px;width:120px;height:32px;border:1px solid #5b9bf9;border-radius:3px"></div><svg class="a" style="left:151px;top:438px" width="14" height="14" viewBox="0 0 14 14"><circle cx="7" cy="7" r="7" fill="#5b9bf9"/><circle cx="7" cy="7" r="2.8" fill="#fff"/></svg><div class="a" style="left:175px;top:435px;line-height:20px;color:#5b9bf9">固定试卷</div>
 <div class="a" style="left:140px;top:479px;width:120px;height:32px;border:1px solid #dcdfe6;border-radius:3px"></div><svg class="a" style="left:151px;top:490px" width="14" height="14" viewBox="0 0 14 14"><circle cx="7" cy="7" r="6.5" fill="#fff" stroke="#dcdfe6" stroke-width="1"/></svg><div class="a" style="left:175px;top:487px;line-height:20px;color:#606266">随机试卷</div>
 <div class="a" style="left:-100px;top:551px;width:220px;text-align:right;line-height:20px;color:#606266"><span style="color:#f56c6c;font-size:12px;margin-right:6px">*</span>试卷名称<span style="margin-left:2px">:</span></div>
 <div class="a" style="left:140px;top:545px;width:550px;height:32px;border:1px solid #dcdfe6;border-radius:3px"></div>
 <div class="a" style="left:-100px;top:609px;width:220px;text-align:right;line-height:20px;color:#606266"><span style="color:#f56c6c;font-size:12px;margin-right:6px">*</span>排序值<span style="margin-left:2px">:</span></div>
 <div class="a" style="left:140px;top:606px;width:130px;height:28px;border:1px solid #dcdfe6;border-radius:3px;overflow:hidden"><div class="a" style="left:0;top:0;width:28px;height:26px;background:#f5f7fa;border-right:1px solid #dcdfe6"></div><div class="a" style="right:0;top:0;width:28px;height:26px;background:#f5f7fa;border-left:1px solid #dcdfe6"></div></div>
 <svg class="a" style="left:149px;top:619px" width="11" height="2" viewBox="0 0 11 2" stroke="#606266" stroke-width="1"><path d="M0 1 H11"/></svg>
 <svg class="a" style="left:250px;top:614px" width="11" height="11" viewBox="0 0 11 11" stroke="#606266" stroke-width="1"><path d="M0 5.5 H11 M5.5 0 V11"/></svg>
 <div class="a" style="left:168px;top:609px;width:73px;text-align:center;line-height:20px;color:#606266">1000</div>
 <div class="a" style="left:284px;top:609px;line-height:20px;color:#999">通过排序值调整当前考试在学员端考试列表的展示排序，值越小越靠前</div>
 <div class="a" style="left:0px;top:689px;width:780px;height:1px;background:#e8e8e8"></div>
 <div class="a" style="left:606px;top:700px;width:70px;height:32px;border:1px solid #dcdfe6;border-radius:3px;text-align:center;line-height:30px;color:#333">取消</div>
 <div class="a" style="left:690px;top:700px;width:70px;height:32px;background:#5b9bf9;border-radius:3px;text-align:center;line-height:32px;color:#fff">确定</div>
</div>
</body></html>
